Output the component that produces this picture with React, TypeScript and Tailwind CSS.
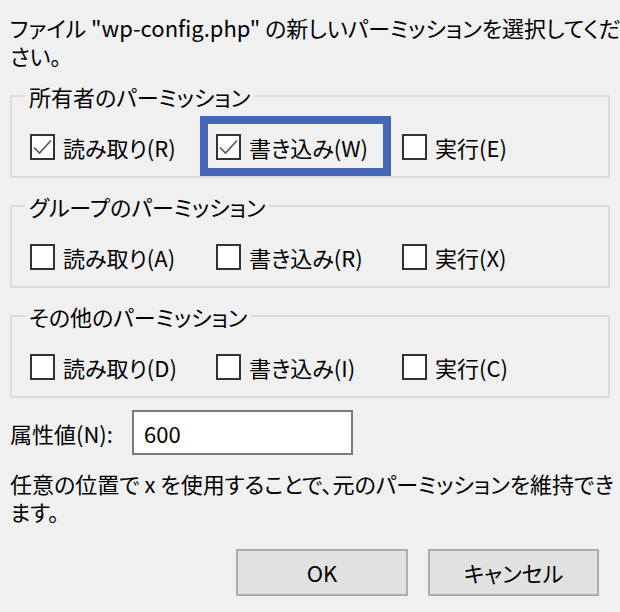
import React, { useState } from 'react';

const FONT = "font-['Noto_Sans_CJK_JP','Noto_Sans',sans-serif] [font-feature-settings:'palt']";

function Check({ checked, label, highlight, onToggle }: any) {
  return (
    <div className="relative w-[186px] h-[26px] flex items-center gap-[8px] shrink-0">
      {highlight && (
        <div className="absolute left-[-16px] top-[-18px] w-[191px] h-[60px] border-[8px] border-[#4766b8] pointer-events-none" />
      )}
      <button
        onClick={onToggle}
        className="w-[25px] h-[26px] border-2 border-[#333333] bg-white flex items-center justify-center shrink-0"
      >
        {checked && (
          <svg viewBox="0 0 21 22" className="w-[21px] h-[22px]">
            <path d="M2 11.5 L7.5 17 L19 4.5" fill="none" stroke="#555555" strokeWidth="1.6" />
          </svg>
        )}
      </button>
      <span className="leading-[26px] whitespace-nowrap">{label}</span>
    </div>
  );
}

function Group({ title, items, state, setState }: any) {
  return (
    <fieldset className="border-2 border-[#dcdcdc] px-[18px] pt-[24px] pb-[16px]">
      <legend className="-ml-[5px] px-[4px] leading-[28px]">{title}</legend>
      <div className="flex">
        {items.map((it: any) => (
          <Check
            key={it.key}
            label={it.label}
            checked={state[it.key]}
            highlight={it.highlight}
            onToggle={() => setState({ ...state, [it.key]: !state[it.key] })}
          />
        ))}
      </div>
    </fieldset>
  );
}

export default function App() {
  const [perm, setPerm] = useState<any>({ ur: true, uw: true, ux: false, gr: false, gw: false, gx: false, or: false, ow: false, ox: false });
  const [value, setValue] = useState('600');

  return (
    <div className={`w-[620px] h-[612px] bg-[#f0f0f0] text-black text-[22px] px-[10px] pt-[13px] flex flex-col ${FONT}`}>
      <p className="leading-[28px] whitespace-nowrap">
        ファイル "wp-config.php" の新しいパーミッションを選択してくだ<br />さい。
      </p>

      <div className="mt-[13px] flex flex-col gap-[14px]">
        <Group
          title="所有者のパーミッション"
          state={perm}
          setState={setPerm}
          items={[
            { key: 'ur', label: '読み取り(R)' },
            { key: 'uw', label: '書き込み(W)', highlight: true },
            { key: 'ux', label: '実行(E)' },
          ]}
        />
        <Group
          title="グループのパーミッション"
          state={perm}
          setState={setPerm}
          items={[
            { key: 'gr', label: '読み取り(A)' },
            { key: 'gw', label: '書き込み(R)' },
            { key: 'gx', label: '実行(X)' },
          ]}
        />
        <Group
          title="その他のパーミッション"
          state={perm}
          setState={setPerm}
          items={[
            { key: 'or', label: '読み取り(D)' },
            { key: 'ow', label: '書き込み(I)' },
            { key: 'ox', label: '実行(C)' },
          ]}
        />
      </div>

      <div className="mt-[12px] flex items-center gap-[10px]">
        <span className="w-[112px] leading-[28px] whitespace-nowrap">属性値(N):</span>
        <input
          value={value}
          onChange={(e) => setValue(e.target.value)}
          className="w-[221px] h-[45px] border-2 border-[#7a7a7a] bg-white pl-[10px] outline-none"
        />
      </div>

      <p className="mt-[14px] leading-[28px] whitespace-nowrap">
        任意の位置で x を使用することで、元のパーミッションを維持でき<br />ます。
      </p>

      <div className="mt-[24px] flex justify-end gap-[20px] pr-[11px]">
        <button className="w-[172px] h-[47px] border-2 border-[#adadad] bg-[#e1e1e1]">OK</button>
        <button className="w-[171px] h-[47px] border-2 border-[#adadad] bg-[#e1e1e1]">キャンセル</button>
      </div>
    </div>
  );
}
